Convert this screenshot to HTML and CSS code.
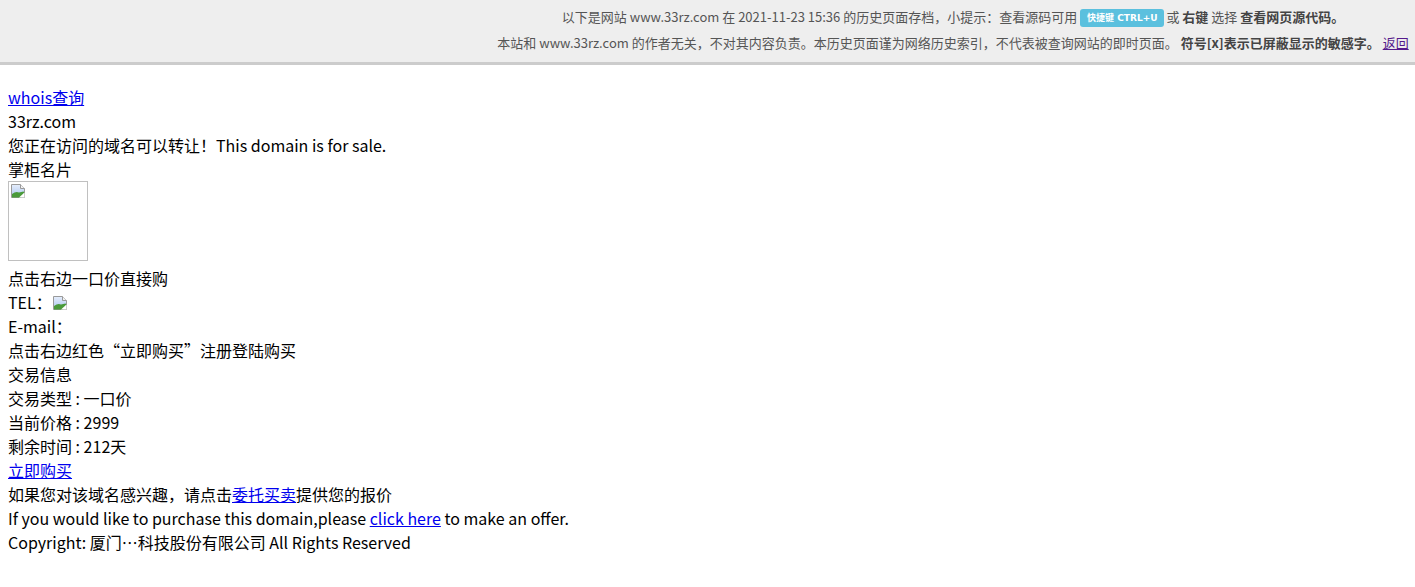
FILE: index.html
```html
<!DOCTYPE html>
<html lang="zh-CN">
<head>
<meta charset="utf-8">
<title>33rz.com</title>
<link rel="stylesheet" href="styles.css">
</head>
<body>
<div class="archive-bar">
  <div class="bar-line">以下是网站 www.33rz.com 在 2021-11-23 15:36 的历史页面存档，小提示：查看源码可用 <span class="label">快捷键 CTRL+U</span> 或 <b>右键</b> 选择 <b>查看网页源代码。</b></div>
  <div class="bar-line">本站和 www.33rz.com 的作者无关，不对其内容负责。本历史页面谨为网络历史索引，不代表被查询网站的即时页面。 <b>符号[x]表示已屏蔽显示的敏感字。</b> <a class="back" href="#">返回</a></div>
</div>
<div class="content">
  <div class="line"><a href="#">whois查询</a></div>
  <div class="line">33rz.com</div>
  <div class="line">您正在访问的域名可以转让！This domain is for sale.</div>
  <div class="line">掌柜名片</div>
  <div class="card-img"><span class="broken"><svg width="16" height="16" viewBox="0 0 16 16"><defs><linearGradient id="sky" x1="0" y1="0" x2="0" y2="1"><stop offset="0" stop-color="#e6eefc"/><stop offset="1" stop-color="#a9c4ee"/></linearGradient></defs><path d="M1.5 1.5h9l4 4v9h-13z" fill="url(#sky)" stroke="#9a9a9a"/><path d="M10.5 1.5v4h4" fill="#f2f2f2" stroke="#9a9a9a"/><path d="M2 14.5 L2 11 Q6 8 9 9.5 L13.5 8.5 L14.5 9.5 L11 14.5 Z" fill="#4a9a3a"/><path d="M9 14.5 L14.5 9.5 V14.5 Z" fill="#fff"/></svg></span></div>
  <div class="line">点击右边一口价直接购</div>
  <div class="line">TEL：<span class="broken tel"><svg width="16" height="16" viewBox="0 0 16 16"><defs><linearGradient id="sky2" x1="0" y1="0" x2="0" y2="1"><stop offset="0" stop-color="#e6eefc"/><stop offset="1" stop-color="#a9c4ee"/></linearGradient></defs><path d="M1.5 1.5h9l4 4v9h-13z" fill="url(#sky2)" stroke="#9a9a9a"/><path d="M10.5 1.5v4h4" fill="#f2f2f2" stroke="#9a9a9a"/><path d="M2 14.5 L2 11 Q6 8 9 9.5 L13.5 8.5 L14.5 9.5 L11 14.5 Z" fill="#4a9a3a"/><path d="M9 14.5 L14.5 9.5 V14.5 Z" fill="#fff"/></svg></span></div>
  <div class="line">E-mail：</div>
  <div class="line">点击右边红色“立即购买”注册登陆购买</div>
  <div class="line">交易信息</div>
  <div class="line">交易类型 : 一口价</div>
  <div class="line">当前价格 : 2999</div>
  <div class="line">剩余时间 : 212天</div>
  <div class="line"><a href="#">立即购买</a></div>
  <div class="line">如果您对该域名感兴趣，请点击<a href="#">委托买卖</a>提供您的报价</div>
  <div class="line">If you would like to purchase this domain,please <a href="#">click here</a> to make an offer.</div>
  <div class="line">Copyright: 厦门…科技股份有限公司 All Rights Reserved</div>
</div>
</body>
</html>
```
FILE: styles.css
```css
html, body {
  margin: 0;
  padding: 0;
  background: #fff;
}
body {
  font-family: "Noto Sans CJK SC", "Noto Sans", sans-serif;
  font-size: 16px;
  color: #000;
}
.archive-bar {
  background: #eeeeee;
  border-bottom: 3px solid #cccccc;
  box-sizing: border-box;
  height: 65px;
  padding: 4px 0 0 491px;
  text-align: center;
  font-size: 13px;
  color: #555;
}
.bar-line {
  line-height: 26px;
  white-space: nowrap;
}
.bar-line b {
  font-weight: bold;
  color: #444;
}
.label {
  display: inline-block;
  background: #5bc0de;
  color: #fff;
  font-family: "DejaVu Sans", "Noto Sans CJK SC", sans-serif;
  font-size: 9px;
  font-weight: bold;
  line-height: 18px;
  height: 18px;
  padding: 0 6px 0 7px;
  border-radius: 3px;
  vertical-align: 1px;
}
.back {
  color: #551a8b;
}
.content {
  padding: 20px 8px 20px;
}
.line {
  line-height: 24px;
}
a {
  color: #0000ee;
}
.card-img {
  border: 1px solid #c0c0c0;
  margin: 0 0 5px;
  padding: 1px;
  width: 76px;
  height: 76px;
}
.broken {
  display: inline-block;
  width: 16px;
  height: 16px;
  vertical-align: top;
}
.broken svg {
  display: block;
}
.tel {
  vertical-align: -2px;
}
```
